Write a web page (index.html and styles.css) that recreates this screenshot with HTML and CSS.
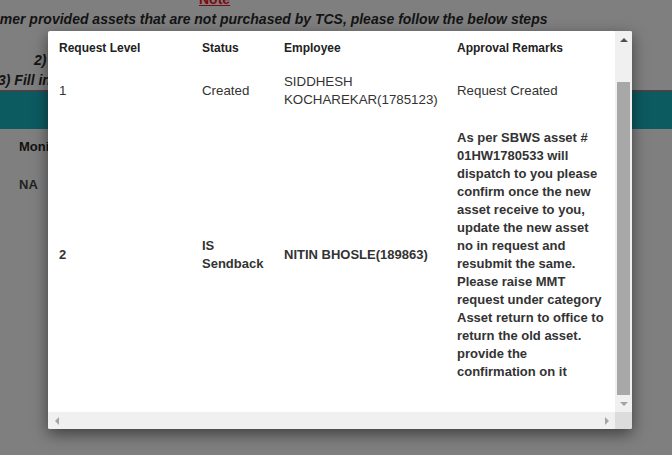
FILE: index.html
```html
<!DOCTYPE html>
<html>
<head>
<meta charset="utf-8">
<link rel="stylesheet" href="styles.css">
</head>
<body>
<div class="page">
  <div class="notice">
    <div class="note-title">Note</div>
    <p class="intro">For customer provided assets that are not purchased by TCS, please follow the below steps</p>
    <div class="steps">
      <div class="step step-1">1) Raise the request for the asset in the portal</div>
      <div class="step step-2">2) Attach the approval mail from the customer</div>
      <div class="step step-3">3) Fill in the asset details and submit the request</div>
    </div>
  </div>
  <div class="band"></div>
  <div class="monitor">
    <div class="monitor-row monitor-head"><span>Monitor Type</span><span>Monitor Serial No</span></div>
    <div class="monitor-row monitor-value"><span>NA</span><span>NA</span></div>
  </div>
</div>

<div class="modal">
  <div class="modal-view">
    <table class="history">
      <colgroup>
        <col class="c1"><col class="c2"><col class="c3"><col class="c4">
      </colgroup>
      <thead>
        <tr>
          <th>Request Level</th>
          <th>Status</th>
          <th>Employee</th>
          <th>Approval Remarks</th>
        </tr>
      </thead>
      <tbody>
        <tr class="row-plain">
          <td>1</td>
          <td>Created</td>
          <td>SIDDHESH KOCHAREKAR(1785123)</td>
          <td>Request Created</td>
        </tr>
        <tr class="row-bold">
          <td>2</td>
          <td>IS Sendback</td>
          <td>NITIN BHOSLE(189863)</td>
          <td>As per SBWS asset # 01HW1780533 will dispatch to you please confirm once the new asset receive to you, update the new asset no in request and resubmit the same. Please raise MMT request under category Asset return to office to return the old asset. provide the confirmation on it</td>
        </tr>
      </tbody>
    </table>
  </div>
  <div class="vbar">
    <div class="arrow-btn"><span class="tri tri-up"></span></div>
    <div class="vtrack"><div class="vthumb"></div></div>
    <div class="arrow-btn"><span class="tri tri-down"></span></div>
  </div>
  <div class="hbar">
    <div class="arrow-btn-h"><span class="tri tri-left"></span></div>
    <div class="arrow-btn-h"><span class="tri tri-right"></span></div>
  </div>
  <div class="corner"></div>
</div>
</body>
</html>
```

FILE: styles.css
```css
html, body {
  margin: 0;
  padding: 0;
}

body {
  width: 672px;
  height: 455px;
  overflow: hidden;
  background: #7f7f7f;
  font-family: "Liberation Sans", Arial, sans-serif;
  position: relative;
}

.page {
  display: flex;
  flex-direction: column;
}

.notice {
  margin-top: -11px;
  font-weight: bold;
  font-style: italic;
  font-size: 14px;
  color: #141414;
  white-space: nowrap;
}

.note-title {
  line-height: 20px;
  padding-left: 199px;
  font-style: normal;
  color: #7a0b12;
  text-decoration: underline;
}

.intro {
  margin: 0 0 0 -64px;
  line-height: 20px;
}

.steps {
  margin-top: 1px;
  display: flex;
  flex-direction: column;
}

.step {
  line-height: 20px;
  height: 20px;
}

.step-1 { padding-left: 90px; }
.step-2 { padding-left: 34px; }
.step-3 { margin-left: -2px; }

.band {
  height: 38px;
  border-top: 1px solid #7a2f33;
  background: #0c5b61;
}

.monitor {
  padding: 10px 0 0 19px;
  display: flex;
  flex-direction: column;
  gap: 22px;
}

.monitor-row {
  display: flex;
  gap: 60px;
  line-height: 16px;
  font-size: 13px;
  font-weight: bold;
}

.monitor-head { color: #111; }
.monitor-value { color: #222; }

/* modal */
.modal {
  position: absolute;
  left: 48px;
  top: 31px;
  width: 584px;
  height: 398px;
  background: #fff;
  border-radius: 2px;
  box-shadow: 0 5px 15px rgba(0, 0, 0, 0.5);
  display: grid;
  grid-template-columns: 567px 17px;
  grid-template-rows: 381px 17px;
  overflow: hidden;
}

.modal-view {
  overflow: hidden;
}

.history {
  width: 567px;
  table-layout: fixed;
  border-collapse: collapse;
}

.c1 { width: 143px; }
.c2 { width: 82px; }
.c3 { width: 173px; }
.c4 { width: 169px; }

.history th {
  text-align: left;
  font-size: 12px;
  font-weight: bold;
  color: #222;
  line-height: 18px;
  padding: 8px 8px 6px 11px;
  vertical-align: middle;
}

.history td {
  text-align: left;
  line-height: 18px;
  padding: 10px 8px 10px 11px;
  vertical-align: middle;
  color: #333;
}

.row-plain td {
  font-size: 13.3px;
  font-weight: normal;
}

.row-bold td {
  font-size: 13px;
  font-weight: bold;
}

/* scrollbars */
.vbar {
  background: #f0f0f0;
  display: flex;
  flex-direction: column;
}

.arrow-btn {
  height: 17px;
  display: flex;
  align-items: center;
  justify-content: center;
}

.vtrack {
  flex: 1;
  display: flex;
  flex-direction: column;
  justify-content: flex-end;
}

.vthumb {
  height: 313px;
  margin: 0 2px;
  background: #a8a8a8;
}

.hbar {
  background: #f0f0f0;
  display: flex;
  justify-content: space-between;
}

.arrow-btn-h {
  width: 17px;
  display: flex;
  align-items: center;
  justify-content: center;
}

.corner {
  background: #dcdcdc;
}

.tri {
  width: 0;
  height: 0;
  display: block;
}

.tri-up {
  border-left: 4px solid transparent;
  border-right: 4px solid transparent;
  border-bottom: 4px solid #505050;
}

.tri-down {
  border-left: 4px solid transparent;
  border-right: 4px solid transparent;
  border-top: 4px solid #a3a3a3;
}

.tri-left {
  border-top: 4px solid transparent;
  border-bottom: 4px solid transparent;
  border-right: 4px solid #a3a3a3;
}

.tri-right {
  border-top: 4px solid transparent;
  border-bottom: 4px solid transparent;
  border-left: 4px solid #a3a3a3;
}
```
